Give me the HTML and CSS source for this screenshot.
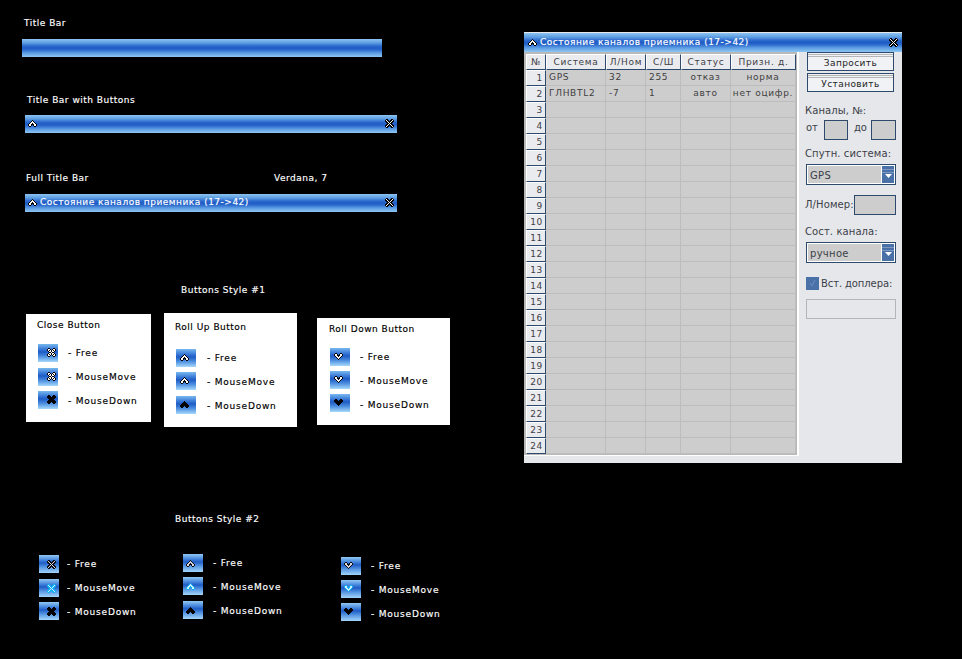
FILE: index.html
```html
<!DOCTYPE html>
<html lang="ru">
<head>
<meta charset="utf-8">
<title>Title Bar</title>
<link rel="stylesheet" href="styles.css">
</head>
<body>
<svg class="defs" width="0" height="0" aria-hidden="true">
  <symbol id="i-close" viewBox="0 0 9 9">
    <path class="o" d="M1 .5h2M6 .5h2M0 1.5h4M5 1.5h4M0 2.5h9M1 3.5h7M2 4.5h5M1 5.5h7M0 6.5h9M0 7.5h4M5 7.5h4M1 8.5h2M6 8.5h2"/>
    <path class="w" d="M1 1.5h2M6 1.5h2M1 2.5h1M3 2.5h1M5 2.5h1M7 2.5h1M2 3.5h2M5 3.5h2M4 4.5h1M2 5.5h2M5 5.5h2M1 6.5h1M3 6.5h1M5 6.5h1M7 6.5h1M1 7.5h2M6 7.5h2"/>
  </symbol>
  <symbol id="i-close2" viewBox="0 0 9 9">
    <path class="o" d="M1 .5h2M6 .5h2M0 1.5h4M5 1.5h4M0 2.5h9M1 3.5h7M2 4.5h5M1 5.5h7M0 6.5h9M0 7.5h4M5 7.5h4M1 8.5h2M6 8.5h2"/>
    <path class="w" d="M1 1.5h1M7 1.5h1M2 2.5h1M6 2.5h1M3 3.5h1M5 3.5h1M4 4.5h1M3 5.5h1M5 5.5h1M2 6.5h1M6 6.5h1M1 7.5h1M7 7.5h1"/>
  </symbol>
  <symbol id="i-up" viewBox="0 0 9 9">
    <path class="o" d="M4 1.5h1M3 2.5h3M2 3.5h5M1 4.5h7M0 5.5h9M0 6.5h4M5 6.5h4M1 7.5h2M6 7.5h2"/>
    <path class="w" d="M4 2.5h1M3 3.5h3M2 4.5h2M5 4.5h2M1 5.5h2M6 5.5h2M1 6.5h2M6 6.5h2"/>
  </symbol>
  <symbol id="i-down" viewBox="0 0 9 9">
    <path class="o" d="M1 1.5h2M6 1.5h2M0 2.5h4M5 2.5h4M0 3.5h9M1 4.5h7M2 5.5h5M3 6.5h3M4 7.5h1"/>
    <path class="w" d="M1 2.5h2M6 2.5h2M1 3.5h2M6 3.5h2M2 4.5h2M5 4.5h2M3 5.5h3M4 6.5h1"/>
  </symbol>
</svg>

<main class="canvas">
  <p class="lbl at-l1">Title Bar</p>
  <div class="bar at-b1"></div>

  <p class="lbl at-l2">Title Bar with Buttons</p>
  <div class="bar at-b2">
    <svg class="ic"><use href="#i-up"/></svg>
    <svg class="ic"><use href="#i-close2"/></svg>
  </div>

  <p class="lbl at-l3">Full Title Bar</p>
  <p class="lbl at-l4">Verdana, 7</p>
  <div class="bar at-b3">
    <svg class="ic"><use href="#i-up"/></svg>
    <span class="bar-title">Состояние каналов приемника (17-&gt;42)</span>
    <svg class="ic"><use href="#i-close2"/></svg>
  </div>

  <p class="lbl at-l5">Buttons Style #1</p>

  <section class="card at-c1">
    <h3 class="lbl card-title">Close Button</h3>
    <div class="row first g10"><span class="btn"><svg class="ic k-close"><use href="#i-close"/></svg></span><span class="lbl item">- Free</span></div>
    <div class="row wide g10"><span class="btn"><svg class="ic k-close"><use href="#i-close"/></svg></span><span class="lbl item">- MouseMove</span></div>
    <div class="row g10"><span class="btn"><svg class="ic k-close down"><use href="#i-close"/></svg></span><span class="lbl item n1">- MouseDown</span></div>
  </section>

  <section class="card at-c2">
    <h3 class="lbl card-title">Roll Up Button</h3>
    <div class="row first g11"><span class="btn"><svg class="ic k-up"><use href="#i-up"/></svg></span><span class="lbl item">- Free</span></div>
    <div class="row g11"><span class="btn"><svg class="ic k-up"><use href="#i-up"/></svg></span><span class="lbl item n1">- MouseMove</span></div>
    <div class="row wide g11"><span class="btn"><svg class="ic k-up down"><use href="#i-up"/></svg></span><span class="lbl item n1">- MouseDown</span></div>
  </section>

  <section class="card at-c3">
    <h3 class="lbl card-title">Roll Down Button</h3>
    <div class="row first g10"><span class="btn"><svg class="ic k-down"><use href="#i-down"/></svg></span><span class="lbl item">- Free</span></div>
    <div class="row g10"><span class="btn"><svg class="ic k-down"><use href="#i-down"/></svg></span><span class="lbl item n1">- MouseMove</span></div>
    <div class="row g10"><span class="btn"><svg class="ic k-down down"><use href="#i-down"/></svg></span><span class="lbl item n2">- MouseDown</span></div>
  </section>

  <p class="lbl at-l6">Buttons Style #2</p>

  <section class="set at-s1">
    <div class="row g8"><span class="btn alt"><svg class="ic k-close dim"><use href="#i-close2"/></svg></span><span class="lbl item">- Free</span></div>
    <div class="row wide g8"><span class="btn alt"><svg class="ic k-close hov2"><use href="#i-close2"/></svg></span><span class="lbl item">- MouseMove</span></div>
    <div class="row g8"><span class="btn alt"><svg class="ic k-close down"><use href="#i-close2"/></svg></span><span class="lbl item n1">- MouseDown</span></div>
  </section>
  <section class="set at-s2">
    <div class="row g10"><span class="btn alt"><svg class="ic k-up dim"><use href="#i-up"/></svg></span><span class="lbl item">- Free</span></div>
    <div class="row g10"><span class="btn alt"><svg class="ic k-up hov2"><use href="#i-up"/></svg></span><span class="lbl item n1">- MouseMove</span></div>
    <div class="row wide g10"><span class="btn alt"><svg class="ic k-up down"><use href="#i-up"/></svg></span><span class="lbl item n1">- MouseDown</span></div>
  </section>
  <section class="set at-s3">
    <div class="row g10"><span class="btn alt"><svg class="ic k-down dim"><use href="#i-down"/></svg></span><span class="lbl item">- Free</span></div>
    <div class="row g10"><span class="btn alt"><svg class="ic k-down hov2"><use href="#i-down"/></svg></span><span class="lbl item n1">- MouseMove</span></div>
    <div class="row g10"><span class="btn alt"><svg class="ic k-down down"><use href="#i-down"/></svg></span><span class="lbl item n2">- MouseDown</span></div>
  </section>

  <section class="window">
    <div class="bar win-bar">
      <svg class="ic"><use href="#i-up"/></svg>
      <span class="bar-title">Состояние каналов приемника (17-&gt;42)</span>
      <svg class="ic"><use href="#i-close2"/></svg>
    </div>
    <div class="win-body">
      <div class="grid-frame">
        <table class="grid">
          <colgroup><col class="c0"><col class="c1"><col class="c2"><col class="c3"><col class="c4"><col class="c5"></colgroup>
          <thead><tr><th>№</th><th>Система</th><th>Л/Ном</th><th>С/Ш</th><th>Статус</th><th>Призн. д.</th></tr></thead>
          <tbody>
            <tr><th>1</th><td>GPS</td><td>32</td><td>255</td><td class="mid">отказ</td><td class="mid">норма</td></tr>
            <tr><th>2</th><td>ГЛНВTL2</td><td>-7</td><td>1</td><td class="mid">авто</td><td class="mid">нет оцифр.</td></tr>
            <tr><th>3</th><td></td><td></td><td></td><td></td><td></td></tr>
            <tr><th>4</th><td></td><td></td><td></td><td></td><td></td></tr>
            <tr><th>5</th><td></td><td></td><td></td><td></td><td></td></tr>
            <tr><th>6</th><td></td><td></td><td></td><td></td><td></td></tr>
            <tr><th>7</th><td></td><td></td><td></td><td></td><td></td></tr>
            <tr><th>8</th><td></td><td></td><td></td><td></td><td></td></tr>
            <tr><th>9</th><td></td><td></td><td></td><td></td><td></td></tr>
            <tr><th>10</th><td></td><td></td><td></td><td></td><td></td></tr>
            <tr><th>11</th><td></td><td></td><td></td><td></td><td></td></tr>
            <tr><th>12</th><td></td><td></td><td></td><td></td><td></td></tr>
            <tr><th>13</th><td></td><td></td><td></td><td></td><td></td></tr>
            <tr><th>14</th><td></td><td></td><td></td><td></td><td></td></tr>
            <tr><th>15</th><td></td><td></td><td></td><td></td><td></td></tr>
            <tr><th>16</th><td></td><td></td><td></td><td></td><td></td></tr>
            <tr><th>17</th><td></td><td></td><td></td><td></td><td></td></tr>
            <tr><th>18</th><td></td><td></td><td></td><td></td><td></td></tr>
            <tr><th>19</th><td></td><td></td><td></td><td></td><td></td></tr>
            <tr><th>20</th><td></td><td></td><td></td><td></td><td></td></tr>
            <tr><th>21</th><td></td><td></td><td></td><td></td><td></td></tr>
            <tr><th>22</th><td></td><td></td><td></td><td></td><td></td></tr>
            <tr><th>23</th><td></td><td></td><td></td><td></td><td></td></tr>
            <tr><th>24</th><td></td><td></td><td></td><td></td><td></td></tr>
          </tbody>
        </table>
      </div>
      <aside class="side">
        <div class="cmd">Запросить</div>
        <div class="cmd cmd-2">Установить</div>
        <div class="f-label f-channels">Каналы, №:</div>
        <div class="f-range">
          <span class="r-txt">от</span><span class="box box-a"></span><span class="r-txt to">до</span><span class="box box-b"></span>
        </div>
        <div class="f-label f-sys">Спутн. система:</div>
        <div class="combo"><span class="combo-val">GPS</span><span class="combo-btn"><svg class="arrow" viewBox="0 0 7 4"><path d="M0 0h7L3.5 4z"/></svg></span></div>
        <div class="f-num"><span class="f-label">Л/Номер:</span><span class="box box-n"></span></div>
        <div class="f-label f-state">Сост. канала:</div>
        <div class="combo"><span class="combo-val">ручное</span><span class="combo-btn"><svg class="arrow" viewBox="0 0 7 4"><path d="M0 0h7L3.5 4z"/></svg></span></div>
        <div class="f-check"><span class="check"><svg viewBox="0 0 13 12"><path d="M4 6l2 3 3-6" /></svg></span><span class="f-label">Вст. доплера:</span></div>
        <div class="disabled"></div>
      </aside>
    </div>
  </section>
</main>
</body>
</html>
```
FILE: styles.css
```css
html, body {
  margin: 0;
  padding: 0;
  background: #000;
}
.defs { position: absolute; }
.canvas {
  position: relative;
  width: 962px;
  height: 659px;
  overflow: hidden;
  background: #000;
  font-family: "DejaVu Sans", Verdana, sans-serif;
}

/* labels */
.lbl {
  margin: 0;
  font-size: 9px;
  font-weight: 400;
  line-height: 11px;
  letter-spacing: 0.5px;
  color: #fff;
  white-space: nowrap;
  -webkit-text-stroke: 0.15px currentColor;
}
.lbl.item { letter-spacing: 0.8px; }
.lbl.n1 { margin-top: 2px; }
.lbl.n2 { margin-top: 4px; }
.at-l1, .at-l2, .at-l3, .at-l4, .at-l5, .at-l6 { position: absolute; }
.at-l1 { left: 24px; top: 18px; }
.at-l2 { left: 27px; top: 95px; }
.at-l3 { left: 26px; top: 173px; }
.at-l4 { left: 274px; top: 173px; }
.at-l5 { left: 181px; top: 285px; }
.at-l6 { left: 175px; top: 514px; }

/* title bars */
.bar {
  display: flex;
  align-items: flex-start;
  height: 18px;
  padding: 4px 3px 0;
  box-sizing: border-box;
  background: linear-gradient(#8cc4f2 0, #5c9de2 22%, #2f6cce 38%, #1e5bc5 50%, #2f6cce 62%, #5c9de2 78%, #8fc6f3 100%);
}
.at-b1, .at-b2, .at-b3 { position: absolute; }
.at-b1 { left: 22px; top: 39px; width: 360px; }
.at-b2 { left: 25px; top: 115px; width: 372px; justify-content: space-between; }
.at-b3 { left: 25px; top: 194px; width: 372px; }
.bar-title {
  flex: 1;
  margin: -1px 0 0 3px;
  font-size: 9px;
  line-height: 11px;
  letter-spacing: 0.5px;
  color: #fff;
  white-space: nowrap;
  -webkit-text-stroke: 0.15px #fff;
}

/* icons */
.ic {
  display: block;
  flex: none;
  width: 9px;
  height: 9px;
  fill: none;
  stroke-width: 1;
  shape-rendering: crispEdges;
  --out: #000;
  --in: #fff;
}
.o { stroke: var(--out); }
.w { stroke: var(--in); }
.down { --out: #000; --in: #000; }
.dim { --out: #0a0a14; --in: #d8d8e0; }
.hov2 { --out: #12b0f2; --in: #c8f2ff; }

/* cards */
.card {
  position: absolute;
  box-sizing: border-box;
  background: #fff;
}
.card .lbl { color: #000; }
.at-c1 { left: 26px; top: 314px; width: 125px; height: 108px; padding: 6px 0 0 12px; }
.at-c2 { left: 164px; top: 313px; width: 133px; height: 114px; padding: 9px 0 0 12px; }
.at-c3 { left: 317px; top: 318px; width: 133px; height: 107px; padding: 6px 0 0 13px; }
.card-title { margin-left: -1px; }
.at-c1 .first { margin-top: 13px; }
.at-c2 .first { margin-top: 16px; }
.at-c3 .first { margin-top: 13px; }

/* button rows */
.row {
  display: flex;
  align-items: center;
  height: 18px;
  margin-top: 5px;
}
.row:first-child { margin-top: 0; }
.row.wide { margin-top: 6px; }
.g8 { column-gap: 8px; }
.g10 { column-gap: 10px; }
.g11 { column-gap: 11px; }
.btn {
  display: flex;
  align-items: flex-start;
  justify-content: flex-start;
  flex: none;
  width: 20px;
  height: 18px;
  background: linear-gradient(#79b8ee 0, #3b7bd8 28%, #1e5bc5 44%, #4a8cde 68%, #a6d9fb 100%);
}
.btn.alt {
  background: linear-gradient(#92c8f3 0, #4a8ade 26%, #1f5cc6 44%, #5c9ce4 70%, #a4d6fa 100%);
}
.k-close { margin: 4px 0 0 9px; }
.k-up { margin: 4px 0 0 4px; }
.k-down { margin: 4px 0 0 4px; }
.alt .k-close { margin: 5px 0 0 8px; }
.alt .k-up { margin: 5px 0 0 3px; }
.alt .k-down { margin: 4px 0 0 3px; }
.set { position: absolute; }
.at-s1 { left: 39px; top: 555px; }
.at-s2 { left: 183px; top: 554px; }
.at-s3 { left: 341px; top: 557px; }

/* window */
.window {
  position: absolute;
  left: 524px;
  top: 32px;
  width: 378px;
  height: 431px;
  display: flex;
  flex-direction: column;
  background: #e6e7eb;
}
.win-bar {
  margin-top: 1px;
  height: 19px;
  padding: 5px 4px 0;
}
.win-body {
  display: flex;
  flex: 1;
}
.grid-frame {
  box-sizing: border-box;
  width: 275px;
  height: 404px;
  padding: 2px 1px 0 2px;
  background: #b9b9b9;
  border-right: 2px solid #fff;
  border-bottom: 1px solid #fff;
}
.grid {
  border-collapse: separate;
  border-spacing: 0;
  table-layout: fixed;
  width: 270px;
  background: #cdcdcd;
  font-size: 9px;
  letter-spacing: 0.7px;
  color: #3f3f3f;
}
.c0 { width: 20px; }
.c1 { width: 60px; }
.c2 { width: 40px; }
.c3 { width: 35px; }
.c4 { width: 50px; }
.c5 { width: 65px; }
.grid th, .grid td {
  box-sizing: border-box;
  height: 16px;
  padding: 0;
  line-height: 11px;
  font-weight: 400;
  overflow: hidden;
  white-space: nowrap;
}
.grid th {
  background: #e9ebef;
  border-top: 1px solid #fff;
  border-left: 1px solid #fff;
  border-right: 1px solid #2d4a6c;
  border-bottom: 1px solid #2d4a6c;
  text-align: center;
  color: #3f4045;
}
.grid tbody th {
  text-align: right;
  padding-right: 2px;
}
.grid td {
  background: #cdcdcd;
  border-right: 1px solid #bdbdbd;
  border-bottom: 1px solid #bdbdbd;
  padding-left: 3px;
}
.grid td.mid { text-align: center; padding-left: 0; }

/* side panel */
.side {
  box-sizing: border-box;
  flex: 1;
  padding: 0 6px;
  font-size: 10px;
  color: #3b3f48;
}
.cmd {
  box-sizing: border-box;
  width: 87px;
  height: 19px;
  margin: 0 0 0 2px;
  border: 1px solid #2d4a6c;
  background: linear-gradient(#f0f2f6 0 1px, #b5b5b5 1px 2px, #f0f2f6 2px 3px, #b5b5b5 3px 4px, #f0f2f6 4px);
  font-size: 9px;
  line-height: 20px;
  letter-spacing: 0.4px;
  text-align: center;
  color: #222;
}
.cmd-2 { margin-top: 2px; }
.f-label {
  font-size: 10px;
  line-height: 12px;
  letter-spacing: 0.1px;
  white-space: nowrap;
  color: #3b3f48;
}
.f-channels { margin-top: 13px; }
.f-range {
  display: flex;
  align-items: flex-start;
  height: 20px;
  margin-top: 3px;
  margin-left: 1px;
  line-height: 12px;
}
.r-txt { margin-top: 2px; }
.box {
  box-sizing: border-box;
  display: block;
  height: 20px;
  background: #cdcdcd;
  border: 1px solid #2d4a6c;
}
.box-a { width: 24px; margin-left: 6px; }
.to { margin-left: 6px; }
.box-b { width: 25px; margin-left: 4px; }
.box-n { width: 42px; }
.f-sys { margin-top: 8px; }
.combo {
  box-sizing: border-box;
  display: flex;
  width: 90px;
  height: 21px;
  margin-top: 4px;
  margin-left: 1px;
  border: 1px solid #2d4a6c;
  padding: 1px;
  background: #fff;
  column-gap: 1px;
}
.combo-val {
  flex: 1;
  background: #cdcdcd;
  padding-left: 2px;
  font-size: 10px;
  line-height: 20px;
  letter-spacing: 0.3px;
  color: #3b3f48;
}
.combo-btn {
  display: flex;
  align-items: center;
  justify-content: center;
  width: 12px;
  background: linear-gradient(#4a70a8 0 3px, #7d97c0 3px 4px, #4a70a8 4px 6px, #7d97c0 6px 7px, #4a70a8 7px);
}
.arrow { width: 7px; height: 4px; fill: #fff; margin-top: 3px; }
.f-num {
  display: flex;
  align-items: center;
  justify-content: space-between;
  width: 91px;
  margin-top: 10px;
}
.f-state { margin-top: 11px; }
.f-check {
  display: flex;
  align-items: center;
  column-gap: 2px;
  margin-top: 14px;
  margin-left: 1px;
  height: 13px;
}
.f-check .f-label { letter-spacing: -0.1px; }
.check {
  display: block;
  width: 13px;
  height: 13px;
  background: #4a70a8;
}
.check svg { display: block; width: 13px; height: 12px; fill: none; stroke: #6d8dbd; stroke-width: 1; }
.disabled {
  box-sizing: border-box;
  width: 90px;
  height: 20px;
  margin-top: 9px;
  margin-left: 1px;
  border: 1px solid #b5b5b5;
}
```
